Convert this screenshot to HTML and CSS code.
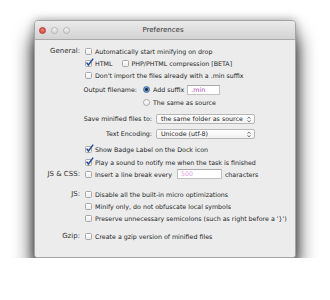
FILE: index.html
```html
<!DOCTYPE html>
<html lang="en">
<head>
    <meta charset="UTF-8">
    <title>Preferences</title>
    <link rel="stylesheet" href="styles.css">
</head>
<body>
    <div class="window">
        <div class="titlebar">
            <div class="lights">
                <span class="light close"></span>
                <span class="light"></span>
                <span class="light"></span>
            </div>
            <div class="title">Preferences</div>
        </div>
        <div class="pane">
            <div class="group">
                <div class="label">General:</div>
                <div class="controls">
                    <div class="row"><span class="box"></span>Automatically start minifying on drop</div>
                    <div class="row">
                        <span class="box checked"><svg viewBox="0 0 9 9"><path d="M1.6 4.6 L3.4 7 L8.2 0.6"/></svg></span>HTML
                        <span class="box second"></span>PHP/PHTML compression [BETA]
                    </div>
                    <div class="row"><span class="box"></span>Don't import the files already with a .min suffix</div>
                    <div class="field output">
                        <div class="field-label">Output filename:</div>
                        <div class="radios">
                            <div class="row tall"><span class="radio on"></span>Add suffix<span class="textbox suffix">.min</span></div>
                            <div class="row tall"><span class="radio"></span>The same as source</div>
                        </div>
                    </div>
                    <div class="field save">
                        <div class="field-label">Save minified files to:</div>
                        <div class="select">the same folder as source<svg viewBox="0 0 4 7"><path d="M0.6 2.6 L2 1.1 L3.4 2.6 M0.6 4.4 L2 5.9 L3.4 4.4"/></svg></div>
                    </div>
                    <div class="field encoding">
                        <div class="field-label">Text Encoding:</div>
                        <div class="select">Unicode (utf-8)<svg viewBox="0 0 4 7"><path d="M0.6 2.6 L2 1.1 L3.4 2.6 M0.6 4.4 L2 5.9 L3.4 4.4"/></svg></div>
                    </div>
                    <div class="row badge"><span class="box checked"><svg viewBox="0 0 9 9"><path d="M1.6 4.6 L3.4 7 L8.2 0.6"/></svg></span>Show Badge Label on the Dock icon</div>
                    <div class="row sound"><span class="box checked"><svg viewBox="0 0 9 9"><path d="M1.6 4.6 L3.4 7 L8.2 0.6"/></svg></span>Play a sound to notify me when the task is finished</div>
                </div>
            </div>
            <div class="group">
                <div class="label">JS &amp; CSS:</div>
                <div class="controls">
                    <div class="row"><span class="box"></span>Insert a line break every<span class="textbox every">500</span>characters</div>
                </div>
            </div>
            <div class="group js">
                <div class="label">JS:</div>
                <div class="controls">
                    <div class="row"><span class="box"></span>Disable all the built-in micro optimizations</div>
                    <div class="row"><span class="box"></span>Minify only, do not obfuscate local symbols</div>
                    <div class="row"><span class="box"></span>Preserve unnecessary semicolons (such as right before a '}')</div>
                </div>
            </div>
            <div class="group gzip">
                <div class="label">Gzip:</div>
                <div class="controls">
                    <div class="row"><span class="box"></span>Create a gzip version of minified files</div>
                </div>
            </div>
        </div>
    </div>
</body>
</html>
```

FILE: styles.css
```css
body {
    margin: 0;
    padding: 20px 34px 0;
    background: #fff;
    font-family: 'DejaVu Sans', sans-serif;
    font-size: 6.3px;
    color: #1e1e1e;
}
.window {
    width: 262px;
    box-sizing: border-box;
    border: 1px solid #a4a4a4;
    border-radius: 4px 4px 3px 3px;
    background: #ececec;
    box-shadow: 0 16px 20px rgba(0, 0, 0, 0.95), 0 0 10px rgba(0, 0, 0, 0.35);
    overflow: hidden;
}
.titlebar {
    height: 18px;
    border-bottom: 1px solid #a9a9a9;
    background: linear-gradient(#ebebeb, #d3d3d3);
    display: flex;
    align-items: center;
}
.lights {
    display: flex;
    gap: 5px;
    padding-left: 4px;
}
.light {
    width: 7px;
    height: 7px;
    border-radius: 50%;
    box-sizing: border-box;
    border: 1px solid #b4b4b4;
    background: linear-gradient(#f3f3f3, #d8d8d8);
}
.light.close {
    border-color: #b23a35;
    background: radial-gradient(circle at 50% 35%, #f47b74, #dc3d36);
}
.title {
    flex: 1;
    text-align: center;
    margin-right: 39px;
    font-size: 7px;
    color: #333;
}
.pane {
    padding: 5px 0 15px;
}
.group {
    display: grid;
    grid-template-columns: 45px 1fr;
    column-gap: 5px;
}
.group.js {
    margin-top: 8px;
}
.group.gzip {
    margin-top: 6px;
}
.label {
    text-align: right;
    line-height: 12px;
    font-size: 7px;
    color: #333;
}
.row {
    display: flex;
    align-items: center;
    height: 12px;
    white-space: nowrap;
}
.row.tall {
    height: 13px;
}
.box {
    width: 7px;
    height: 7px;
    box-sizing: border-box;
    border: 1px solid #a8a8a8;
    border-radius: 1.5px;
    background: linear-gradient(#fff, #ececec);
    margin-right: 3px;
    flex: none;
    position: relative;
}
.box.second {
    margin-left: 9px;
}
.box svg {
    position: absolute;
    left: -1px;
    top: -3px;
    width: 9px;
    height: 9px;
    fill: none;
    stroke: #254d9c;
    stroke-width: 1.5;
}
.radio {
    width: 7px;
    height: 7px;
    box-sizing: border-box;
    border-radius: 50%;
    border: 1px solid #a8a8a8;
    background: linear-gradient(#fff, #ececec);
    margin-right: 3px;
    flex: none;
}
.radio.on {
    border-color: #4a6fa8;
    background: radial-gradient(circle, #1f2c44 0 1.3px, #7fa6db 1.6px, #4d7fc6 100%);
}
.field {
    display: flex;
    align-items: flex-start;
}
.field-label {
    text-align: right;
    line-height: 12px;
    white-space: nowrap;
    flex: none;
}
.field.output {
    margin-top: 2px;
}
.field.output .field-label {
    width: 55px;
    margin-left: -3px;
    line-height: 13px;
    margin-right: 6px;
}
.field.save {
    margin-top: 4px;
}
.field.encoding {
    margin-top: 3px;
}
.field.save .field-label,
.field.encoding .field-label {
    width: 70px;
    margin-left: -3px;
    margin-right: 4px;
}
.select {
    width: 99px;
    height: 10px;
    margin-top: 1px;
    box-sizing: border-box;
    border: 1px solid #b7b7b7;
    border-radius: 2px;
    background: linear-gradient(#fff, #f1f1f1);
    display: flex;
    align-items: center;
    justify-content: space-between;
    padding: 0 3px 0 4px;
    line-height: 8px;
}
.select svg {
    width: 4px;
    height: 7px;
    fill: none;
    stroke: #444;
    stroke-width: 0.8;
}
.textbox {
    height: 10px;
    box-sizing: border-box;
    border: 1px solid #c2c2c2;
    border-top-color: #a9a9a9;
    background: #fff;
    line-height: 8px;
    padding-left: 3px;
    flex: none;
}
.textbox.suffix {
    width: 33px;
    margin-left: 3px;
    color: #b23db9;
}
.textbox.every {
    width: 45px;
    margin: 0 3px 0 5px;
    color: #dba5dd;
}
.row.badge {
    margin-top: 3px;
}
.row.sound {
    margin-top: 1px;
}
```
